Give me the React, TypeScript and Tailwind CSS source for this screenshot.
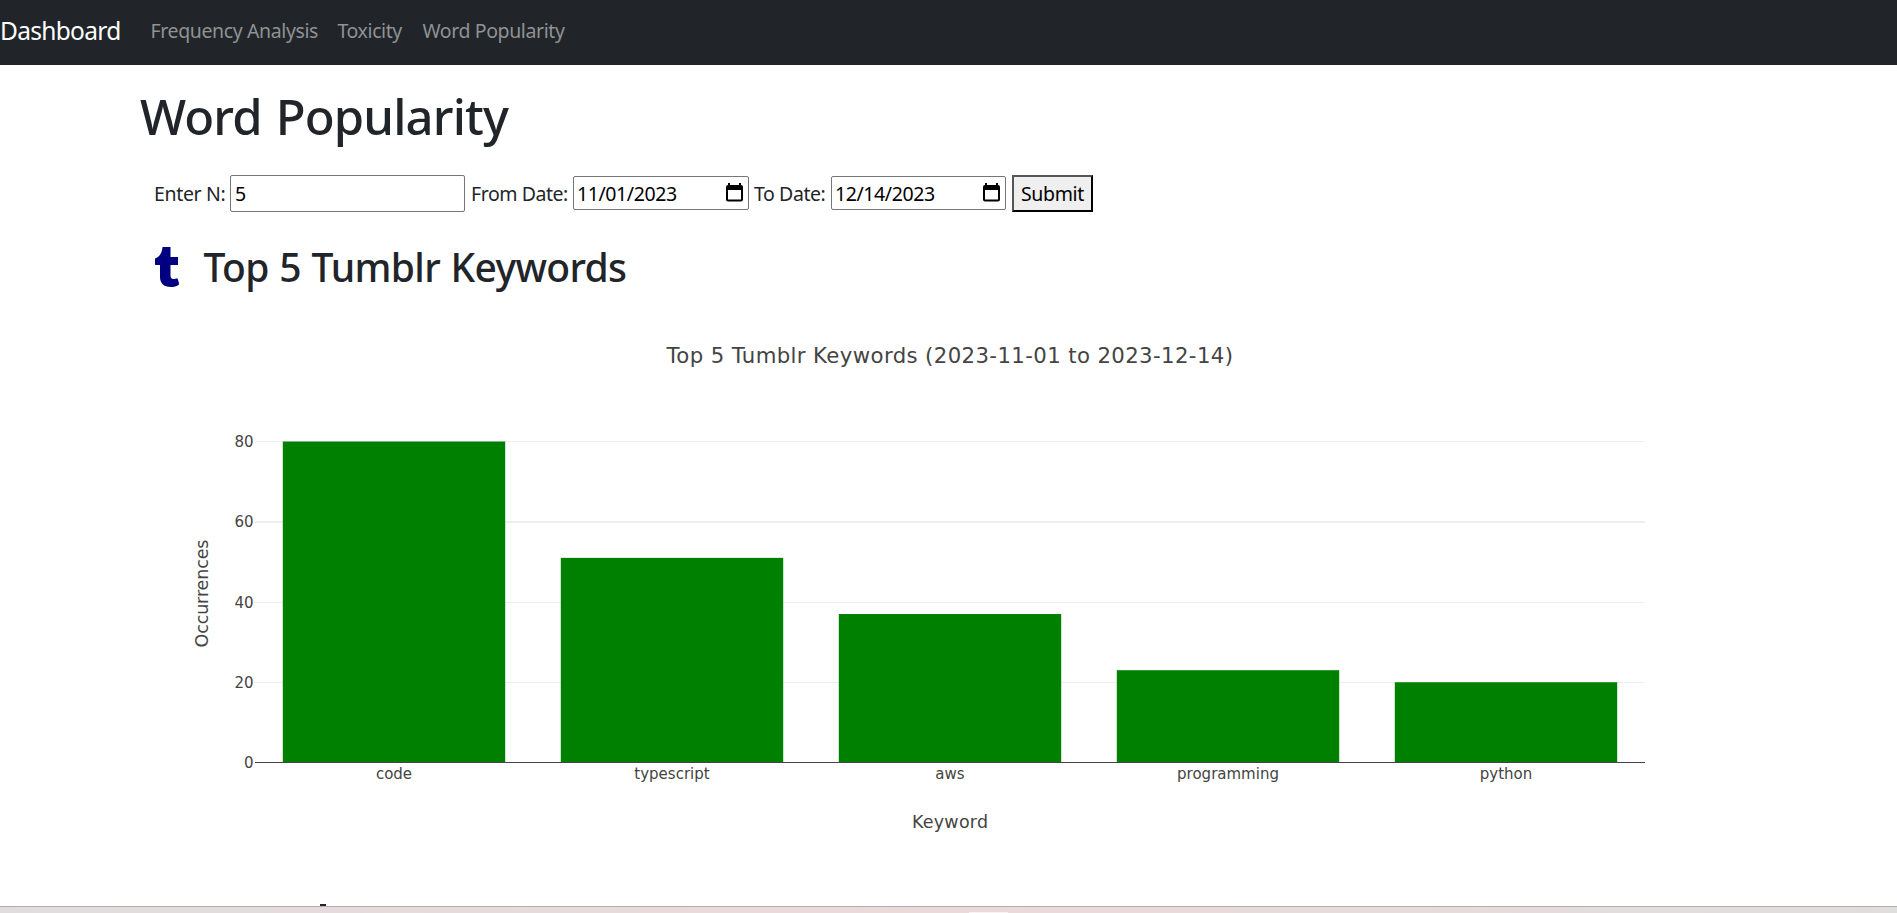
import React from "react";

const DATA = [
  { keyword: "code", count: 80 },
  { keyword: "typescript", count: 51 },
  { keyword: "aws", count: 37 },
  { keyword: "programming", count: 23 },
  { keyword: "python", count: 20 },
];

const LEFT = 255;
const RIGHT = 1645;
const BASE = 452.5;
const UNIT = 4.0125;
const SLOT = (RIGHT - LEFT) / DATA.length;

function NavBar() {
  return (
    <nav className="flex h-[65px] shrink-0 items-center bg-[#212529] text-[19.5px] text-[#909294]">
      <a className="w-[150.5px] pb-[2px] text-[24.5px] tracking-[-0.7px] text-white">Dashboard</a>
      <a className="w-[187px] pb-[4px] tracking-[-0.38px]">Frequency Analysis</a>
      <a className="w-[85px] pb-[4px] tracking-[-0.4px]">Toxicity</a>
      <a className="pb-[4px] tracking-[-0.4px]">Word Popularity</a>
    </nav>
  );
}

function CalendarIcon() {
  return (
    <svg width="17" height="19" viewBox="0 0 17 19" className="shrink-0">
      <path d="M2 0h2v2h9V0h2v2a2 2 0 0 1 2 2v12.500a2 2 0 0 1-2 2H2a2 2 0 0 1-2-2V4a2 2 0 0 1 2-2zM2 7v9.500h13V7z" fill="#000" fillRule="evenodd" />
    </svg>
  );
}

function DateField({ value, width }: { value: string; width: string }) {
  return (
    <div className={`mb-[2px] flex h-[34px] shrink-0 items-center justify-between rounded-[2px] border border-[#767676] pr-[5px] pl-[3px] tracking-[-0.4px] text-black ${width}`}>
      <span className="pt-[2px]">{value}</span>
      <CalendarIcon />
    </div>
  );
}

function Filters() {
  return (
    <form className="mt-[27px] flex h-[37px] shrink-0 items-center pl-[154px] text-[19.5px] whitespace-nowrap" onSubmit={(e) => e.preventDefault()}>
      <label className="w-[76px] tracking-[-0.35px]">Enter N:</label>
      <div className="flex h-[37px] w-[235px] items-center rounded-[2px] border border-[#767676] pl-[4px] text-black">5</div>
      <label className="ml-[6px] w-[102px] tracking-[-0.45px]">From Date:</label>
      <DateField value="11/01/2023" width="w-[176px]" />
      <label className="ml-[5px] w-[77px] tracking-[-0.42px]">To Date:</label>
      <DateField value="12/14/2023" width="w-[175px]" />
      <button type="submit" className="ml-[6px] flex h-[37px] w-[81px] items-center justify-center border-2 border-t-[#555] border-r-black border-b-black border-l-[#555] bg-[#efefef] tracking-[-0.35px] text-black">
        Submit
      </button>
    </form>
  );
}

function Chart() {
  return (
    <svg width="1897" height="540" viewBox="0 0 1897 540" className="block shrink-0 font-['DejaVu_Sans',sans-serif]" fill="#444">
      <text x="666.500" y="53" fontSize="21.25" textLength="566.500" lengthAdjust="spacing">
        Top 5 Tumblr Keywords (2023-11-01 to 2023-12-14)
      </text>
      {[20, 40, 60, 80].map((v) => (
        <rect key={v} x={LEFT} y={v === 60 ? 211 : Math.floor(BASE - v * UNIT)} width={RIGHT - LEFT} height={v === 60 ? 2 : 1} fill="#eee" />
      ))}
      {[0, 20, 40, 60, 80].map((v) => (
        <text key={v} x="253.500" y={BASE - v * UNIT + 5.5} fontSize="15" textAnchor="end">
          {v}
        </text>
      ))}
      {DATA.map((d, i) => {
        const x = LEFT + SLOT * (i + 0.1);
        const top = BASE - d.count * UNIT;
        return (
          <g key={d.keyword}>
            <rect x={x} y={top} width={SLOT * 0.8} height={BASE - top} fill="#008000" />
            <text x={LEFT + SLOT * (i + 0.5)} y="469" fontSize="15" textAnchor="middle">
              {d.keyword}
            </text>
          </g>
        );
      })}
      <rect x={LEFT} y="452" width={RIGHT - LEFT} height="1" shapeRendering="crispEdges" />
      <text x="912" y="518" fontSize="17.5" textLength="76" lengthAdjust="spacing">
        Keyword
      </text>
      <text transform="translate(208 337.500) rotate(-90)" fontSize="17.5" textLength="108" lengthAdjust="spacing">
        Occurrences
      </text>
    </svg>
  );
}

export default function App() {
  return (
    <div className="flex h-[913px] w-[1897px] flex-col overflow-hidden bg-white font-['Noto_Sans',sans-serif] text-[#212529]">
      <NavBar />
      <main className="flex h-[841px] shrink-0 flex-col overflow-hidden">
        <h1 className="mt-[21px] mb-[2px] h-[60px] shrink-0 pl-[140px] text-[49px] leading-[60px] font-medium tracking-[-0.85px] [word-spacing:2px]">Word Popularity</h1>
        <Filters />
        <div className="mt-[32px] mb-px flex h-[48px] shrink-0 items-center pl-[155px]">
          <svg width="25" height="40" viewBox="0 0 25 40" className="mb-[2px] shrink-0">
            <path d="M7.500 0H15.500V10H23V18H15.500V28.500C15.500 31 16.800 32 18.500 32C20 32 21 31.500 22 31.200C22.800 31.200 24.500 37 24 37.500C22 39.500 18.500 40 16 40C8.500 40 5 36 5 30V18H1C0.300 18 0 17.700 0 17V11.500C4.500 10 7 6 7.500 0Z" fill="#000080" />
          </svg>
          <h2 className="mb-[2px] ml-[23.500px] text-[39px] leading-[48px] font-medium tracking-[-0.65px] [word-spacing:1px]">Top 5 Tumblr Keywords</h2>
        </div>
        <div className="mt-[17px] shrink-0">
          <Chart />
        </div>
        <div className="mt-[54px] ml-[320px] h-[2px] w-[6px] shrink-0 bg-[#212529]" />
      </main>
      <footer className="flex h-[7px] shrink-0 items-end border-t border-[#b3adae] bg-linear-to-r from-[#e0dcdd] via-[#eadada] to-[#e0dddd] pl-[969px]">
        <div className="h-px w-[39px] bg-[#f8f2f2]" />
      </footer>
    </div>
  );
}
